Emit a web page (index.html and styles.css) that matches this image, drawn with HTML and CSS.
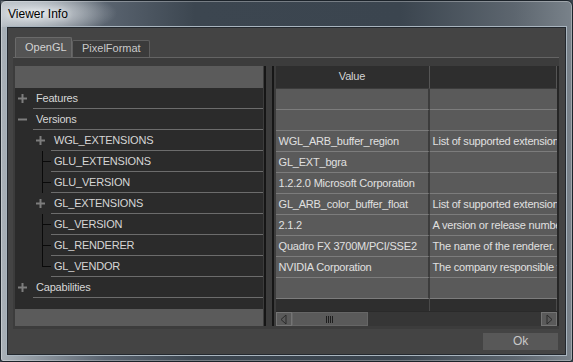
FILE: index.html
```html
<!doctype html>
<html>
	<head>
		<title>Viewer Info</title>
		<link rel="stylesheet" href="styles.css">
	</head>
	<body>
		<div class="window">
			<div class="titlebar"><span class="title">Viewer Info</span></div>

			<div class="client">
				<div class="tabs">
					<div class="tab selected">OpenGL</div>
					<div class="tab">PixelFormat</div>
				</div>

				<div class="pane">
					<div class="tree">
						<div class="head"></div>

						<div class="row">
							<span class="indent"><svg class="pm" width="9" height="9"><rect x="0" y="3.5" width="9" height="2"/><rect x="3.5" y="0" width="2" height="9"/></svg></span>
							<span class="label">Features</span>
						</div>
						<div class="row">
							<span class="indent"><svg class="pm" width="9" height="9"><rect x="0" y="3.5" width="9" height="2"/></svg></span>
							<span class="label">Versions</span>
						</div>
						<div class="row child">
							<span class="indent"></span>
							<span class="indent"><svg class="pm" width="9" height="9"><rect x="0" y="3.5" width="9" height="2"/><rect x="3.5" y="0" width="2" height="9"/></svg></span>
							<span class="label">WGL_EXTENSIONS</span>
						</div>
						<div class="row child">
							<span class="indent"></span>
							<span class="indent branch"></span>
							<span class="label">GLU_EXTENSIONS</span>
						</div>
						<div class="row child">
							<span class="indent"></span>
							<span class="indent branch"></span>
							<span class="label">GLU_VERSION</span>
						</div>
						<div class="row child">
							<span class="indent"></span>
							<span class="indent"><svg class="pm" width="9" height="9"><rect x="0" y="3.5" width="9" height="2"/><rect x="3.5" y="0" width="2" height="9"/></svg></span>
							<span class="label">GL_EXTENSIONS</span>
						</div>
						<div class="row child">
							<span class="indent"></span>
							<span class="indent branch"></span>
							<span class="label">GL_VERSION</span>
						</div>
						<div class="row child">
							<span class="indent"></span>
							<span class="indent branch"></span>
							<span class="label">GL_RENDERER</span>
						</div>
						<div class="row child">
							<span class="indent"></span>
							<span class="indent branch last"></span>
							<span class="label">GL_VENDOR</span>
						</div>
						<div class="row">
							<span class="indent"><svg class="pm" width="9" height="9"><rect x="0" y="3.5" width="9" height="2"/><rect x="3.5" y="0" width="2" height="9"/></svg></span>
							<span class="label">Capabilities</span>
						</div>

						<div class="filler"></div>
						<div class="hbar"></div>
					</div>

					<div class="splitter"><span></span><span></span></div>

					<div class="grid">
						<div class="grow head">
							<div class="cell c1">Value</div>
							<div class="cell c2"></div>
						</div>
						<div class="grow"><div class="cell c1"></div><div class="cell c2"></div></div>
						<div class="grow"><div class="cell c1"></div><div class="cell c2"></div></div>
						<div class="grow"><div class="cell c1">WGL_ARB_buffer_region</div><div class="cell c2">List of supported extensions</div></div>
						<div class="grow"><div class="cell c1">GL_EXT_bgra</div><div class="cell c2"></div></div>
						<div class="grow"><div class="cell c1">1.2.2.0 Microsoft Corporation</div><div class="cell c2"></div></div>
						<div class="grow"><div class="cell c1">GL_ARB_color_buffer_float</div><div class="cell c2">List of supported extensions</div></div>
						<div class="grow"><div class="cell c1">2.1.2</div><div class="cell c2">A version or release number</div></div>
						<div class="grow"><div class="cell c1">Quadro FX 3700M/PCI/SSE2</div><div class="cell c2">The name of the renderer.</div></div>
						<div class="grow"><div class="cell c1">NVIDIA Corporation</div><div class="cell c2">The company responsible for this implementation</div></div>
						<div class="grow"><div class="cell c1"></div><div class="cell c2"></div></div>
						<div class="grow filler"><div class="cell c1"></div><div class="cell c2"></div></div>

						<div class="scrollbar">
							<div class="sbtn"><svg width="7" height="11"><polygon points="6,1 1,5.5 6,10" /></svg></div>
							<div class="thumb"><span></span><span></span><span></span><span></span></div>
							<div class="track"></div>
							<div class="sbtn"><svg width="7" height="11"><polygon points="1,1 6,5.5 1,10" /></svg></div>
						</div>
					</div>
				</div>

				<div class="actions">
					<div class="button">Ok</div>
				</div>
			</div>
		</div>
	</body>
</html>
```
FILE: styles.css
```css
html, body {
	padding: 0;
	margin: 0;
}
body {
	font-family: "Liberation Sans", Arial, sans-serif;
	font-size: 11px;
	letter-spacing: -0.2px;
	background: #3b444e;
}

.window {
	width: 573px;
	height: 362px;
	box-sizing: border-box;
	display: flex;
	flex-direction: column;
	border: 1px solid #1c232a;
	border-radius: 6px 6px 3px 3px;
	background: linear-gradient(90deg, #a9b1b8 0%, #5a6470 18%, #3c4650 34%, #3b454f 70%, #5d666f 90%, #79828a 100%);
	box-shadow: inset 0 0 0 1px rgba(255, 255, 255, .3);
}
.titlebar {
	height: 26px;
	flex: none;
	display: flex;
	align-items: center;
	padding-left: 7px;
	background: radial-gradient(ellipse 80px 22px at 36px 12px, rgba(228, 232, 236, .95), rgba(228, 232, 236, 0));
}
.title {
	font-size: 12px;
	letter-spacing: 0;
	color: #000;
	text-shadow: 0 0 6px #fff;
}

.client {
	flex: 1;
	margin: 0 6px 6px;
	border: 1px solid #23282e;
	box-shadow: 0 0 0 1px #a9b5bf;
	background: #444;
	padding: 9px 6px 4px 5px;
	display: flex;
	flex-direction: column;
}

.tabs {
	display: flex;
	align-items: flex-end;
	height: 20px;
	margin-left: 2px;
}
.tab {
	box-sizing: border-box;
	height: 17px;
	padding: 0 8px 0 9px;
	line-height: 15px;
	color: #c9c9c9;
	background: #3b3b3b;
	border: 1px solid #5e5e5e;
	border-bottom: none;
	border-radius: 2px 2px 0 0;
	letter-spacing: 0;
}
.tab.selected {
	height: 20px;
	line-height: 19px;
	width: 57px;
	padding: 0 0 0 9px;
	color: #d2d2d2;
	background: #545454;
	border-color: #6a6a6a;
}

.pane {
	flex: none;
	height: 272px;
	box-sizing: border-box;
	border-top: 1px solid #646464;
	background: #3c3c3c;
	padding: 8px 0 3px 2px;
	display: flex;
}

/* tree */
.tree {
	width: 248px;
	background: #2b2b2b;
	color: #d6d6d6;
	display: flex;
	flex-direction: column;
}
.tree .head {
	height: 22px;
	background: #5b5b5b;
}
.row {
	display: flex;
	height: 21px;
}
.indent {
	width: 18px;
	flex: none;
	position: relative;
}
.pm {
	position: absolute;
	left: 3px;
	top: 6px;
	fill: #7d7d7d;
}
.branch::before {
	content: "";
	position: absolute;
	left: 9px;
	top: 0;
	bottom: 0;
	border-left: 1px solid #0a0a0a;
}
.branch.last::before {
	bottom: 10px;
}
.branch::after {
	content: "";
	position: absolute;
	left: 9px;
	right: 0;
	top: 10px;
	border-top: 1px solid #0a0a0a;
}
.label {
	flex: 1;
	padding-left: 3px;
	line-height: 21px;
	border-bottom: 1px solid #6c6c6c;
	white-space: nowrap;
}
.tree .filler {
	height: 12px;
}
.hbar {
	height: 17px;
	background: #5b5b5b;
}

.splitter {
	width: 12px;
	display: flex;
	gap: 6px;
	padding-left: 1px;
}
.splitter span {
	width: 2px;
	background: #161616;
}

/* value grid */
.grid {
	width: 284px;
	box-sizing: border-box;
	border-right: 2px solid #262626;
	display: flex;
	flex-direction: column;
	color: #e0e0e0;
	overflow: hidden;
}
.grow {
	display: flex;
	height: 21px;
	flex: none;
}
.cell {
	box-sizing: border-box;
	padding-left: 3px;
	line-height: 21px;
	white-space: nowrap;
	overflow: hidden;
	background: #5a5a5a;
	border-bottom: 1px solid #7c7c7c;
	border-right: 2px solid #3c3c3c;
}
.c1 {
	width: 154px;
	flex: none;
}
.c2 {
	flex: 1;
	border-right: none;
}
.grow.head {
	height: 23px;
}
.grow.head .cell {
	background: #2e2e2e;
	border-bottom: 1px solid #3c3c3c;
	border-right: 1px solid #555;
	line-height: 21px;
	color: #d4d4d4;
}
.grow.head .c1 {
	text-align: center;
	padding: 0;
}
.grow.filler {
	height: 12px;
}
.grow.filler .cell {
	background: #2e2e2e;
	border-bottom: none;
	border-right: 1px solid #4a4a4a;
}

.scrollbar {
	height: 16px;
	display: flex;
	background: #363636;
	border-top: 1px solid #2a2a2a;
}
.sbtn {
	width: 16px;
	box-sizing: border-box;
	background: #5a5a5a;
	border: 1px solid #747474;
	display: flex;
	align-items: center;
	justify-content: center;
}
.sbtn polygon {
	fill: none;
	stroke: #2a2a2a;
	stroke-width: 1;
}
.thumb {
	width: 76px;
	box-sizing: border-box;
	background: #5a5a5a;
	border: 1px solid #666;
	display: flex;
	align-items: center;
	justify-content: center;
	gap: 1px;
}
.thumb span {
	width: 1px;
	height: 7px;
	background: #1e1e1e;
}
.track {
	flex: 1;
}

.actions {
	display: flex;
	justify-content: flex-end;
	margin-top: 4px;
	padding-right: 1px;
}
.button {
	width: 75px;
	height: 17px;
	line-height: 17px;
	text-align: center;
	background: #585858;
	color: #c8c8c8;
	font-size: 12px;
}
```
